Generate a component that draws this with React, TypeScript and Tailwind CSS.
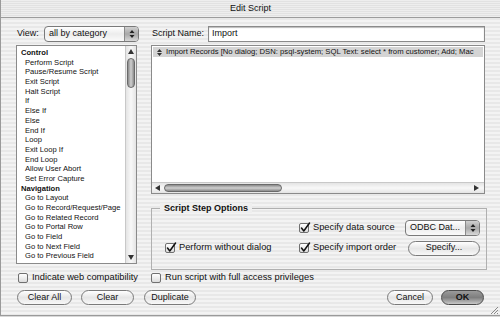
import type { ReactNode } from "react";

const listItems: { label: string; head?: boolean }[] = [
  { label: "Control", head: true },
  { label: "Perform Script" },
  { label: "Pause/Resume Script" },
  { label: "Exit Script" },
  { label: "Halt Script" },
  { label: "If" },
  { label: "Else If" },
  { label: "Else" },
  { label: "End If" },
  { label: "Loop" },
  { label: "Exit Loop If" },
  { label: "End Loop" },
  { label: "Allow User Abort" },
  { label: "Set Error Capture" },
  { label: "Navigation", head: true },
  { label: "Go to Layout" },
  { label: "Go to Record/Request/Page" },
  { label: "Go to Related Record" },
  { label: "Go to Portal Row" },
  { label: "Go to Field" },
  { label: "Go to Next Field" },
  { label: "Go to Previous Field" },
  { label: "Enter Browse Mode" },
];

function Check({ on }: { on?: boolean }) {
  return (
    <span className="relative inline-block h-[10px] w-[10px] shrink-0 rounded-[2px] border border-[#707070] bg-gradient-to-b from-white to-[#dcdcdc]">
      {on && (
        <svg className="absolute left-[0px] top-[-2px]" width="11" height="11" viewBox="0 0 11 11">
          <path d="M1.5 6 L3.8 9 L9.5 1" fill="none" stroke="#111" strokeWidth="1.5" strokeLinecap="round" strokeLinejoin="round" />
        </svg>
      )}
    </span>
  );
}

function CheckRow({ on, children, className = "" }: { on?: boolean; children: ReactNode; className?: string }) {
  return (
    <div className={`flex items-center gap-[4px] text-[9.3px] text-[#111] ${className}`}>
      <Check on={on} />
      <span>{children}</span>
    </div>
  );
}

function Btn({ children, className = "", primary }: { children: ReactNode; className?: string; primary?: boolean }) {
  return (
    <div
      className={`flex h-[15px] items-center justify-center rounded-full border text-[9px] text-[#111] ${
        primary
          ? "border-[#4a4a4a] bg-gradient-to-b from-[#9a9a9a] via-[#7e7e7e] to-[#c8c8c8] font-bold"
          : "border-[#7a7a7a] bg-gradient-to-b from-white via-[#e6e6e6] to-[#f8f8f8]"
      } ${className}`}
    >
      {children}
    </div>
  );
}

function Popup({ children, className = "" }: { children: ReactNode; className?: string }) {
  return (
    <div className={`flex h-[16px] items-stretch overflow-hidden rounded-[4px] border border-[#7a7a7a] bg-gradient-to-b from-white via-[#ececec] to-[#fafafa] ${className}`}>
      <span className="flex flex-1 items-center pl-[4px] text-[9px] text-[#111]">{children}</span>
      <span className="flex w-[14px] flex-col items-center justify-center border-l border-[#8a8a8a] bg-gradient-to-b from-[#d0d0d0] via-[#a8a8a8] to-[#d8d8d8]">
        <svg width="6" height="10" viewBox="0 0 6 10">
          <path d="M0.5 4 L3 1 L5.5 4 Z M0.5 6 L3 9 L5.5 6 Z" fill="#222" />
        </svg>
      </span>
    </div>
  );
}

export default function App() {
  return (
    <div className="h-[317px] w-[500px] overflow-hidden bg-[#d8d8d8] font-['Liberation_Sans',Arial,sans-serif]">
      <div className="flex h-[316px] flex-col border-b border-l border-[#9a9a9a] bg-[repeating-linear-gradient(180deg,#f3f3f3_0px,#f3f3f3_2px,#e8e8e8_2px,#e8e8e8_4px)]">
        {/* Title bar */}
        <div className="flex h-[18px] shrink-0 items-center justify-center border-b border-[#9c9c9c] bg-[repeating-linear-gradient(180deg,#eeeeee_0px,#eeeeee_1px,#e2e2e2_1px,#e2e2e2_2px)] text-[9px] text-[#111]">
          Edit Script
        </div>

        <div className="flex gap-[12px] pl-[15px] pt-[8px]">
          {/* Left column */}
          <div className="flex w-[123px] flex-col">
            <div className="flex h-[16px] items-center">
              <span className="w-[28px] pl-[1px] text-[9px] text-[#111]">View:</span>
              <Popup className="w-[95px]">all by category</Popup>
            </div>
            <div className="mt-[3px] flex h-[219px] w-[121px] border border-[#8a8a8a] bg-white">
              <div className="flex-1 overflow-hidden pl-[4px] pt-[2px]">
                {listItems.map((it) => (
                  <div
                    key={it.label}
                    className={`h-[9.7px] whitespace-nowrap text-[7.6px] leading-[9.7px] text-[#111] ${
                      it.head ? "font-bold" : "pl-[4px]"
                    }`}
                  >
                    {it.label}
                  </div>
                ))}
              </div>
              {/* vertical scrollbar */}
              <div className="flex w-[11px] flex-col items-center border-l border-[#c8c8c8] bg-gradient-to-r from-[#e4e4e4] via-[#f8f8f8] to-[#e4e4e4]">
                <svg className="mt-[3px]" width="6" height="5" viewBox="0 0 6 5">
                  <path d="M0 5 L3 0 L6 5 Z" fill="#333" />
                </svg>
                <div className="mt-[4px] h-[30px] w-[8px] rounded-full border border-[#6a6a6a] bg-gradient-to-r from-[#8a8a8a] via-[#d0d0d0] to-[#8a8a8a]" />
                <div className="flex-1" />
                <svg className="mb-[3px]" width="6" height="5" viewBox="0 0 6 5">
                  <path d="M0 0 L3 5 L6 0 Z" fill="#333" />
                </svg>
              </div>
            </div>
          </div>

          {/* Right column */}
          <div className="flex w-[336px] flex-col">
            <div className="flex h-[16px] items-center">
              <span className="w-[57px] pl-[1px] text-[9px] text-[#111]">Script Name:</span>
              <div className="flex h-[16px] w-[277px] items-center border border-[#8a8a8a] bg-white pl-[3px] text-[9px] text-[#111] shadow-[inset_0_1px_1px_#bbb]">
                Import
              </div>
            </div>

            <div className="mt-[3px] flex h-[149px] w-[334px] flex-col border border-[#8a8a8a] bg-white">
              <div className="mx-[1px] mt-[1px] flex h-[10px] items-center gap-[4px] bg-[#d4d4d4] pl-[4px]">
                <svg width="5" height="7" viewBox="0 0 5 7">
                  <path d="M0 3 L2.5 0 L5 3 Z M0 4 L2.5 7 L5 4 Z" fill="#333" />
                </svg>
                <span className="whitespace-nowrap text-[7.7px] leading-[10px] text-[#111]">
                  Import Records [No dialog; DSN: psql-system; SQL Text: select * from customer; Add; Mac
                </span>
              </div>
              <div className="flex-1" />
              {/* horizontal scrollbar */}
              <div className="flex h-[11px] items-center border-t border-[#c8c8c8] bg-gradient-to-b from-[#e4e4e4] via-[#f8f8f8] to-[#e4e4e4]">
                <svg className="ml-[3px]" width="5" height="6" viewBox="0 0 5 6">
                  <path d="M5 0 L0 3 L5 6 Z" fill="#333" />
                </svg>
                <div className="ml-[4px] h-[8px] w-[118px] rounded-full border border-[#6a6a6a] bg-gradient-to-b from-[#8a8a8a] via-[#d0d0d0] to-[#8a8a8a]" />
                <div className="flex-1" />
                <svg className="mr-[5px]" width="5" height="6" viewBox="0 0 5 6">
                  <path d="M0 0 L5 3 L0 6 Z" fill="#333" />
                </svg>
              </div>
            </div>

            {/* Script Step Options */}
            <div className="relative mt-[14px] h-[62px] w-[336px] border border-[#b0b0b0]">
              <span className="absolute left-[8px] top-[-6px] bg-[#efefef] px-[4px] text-[9px] font-bold leading-[10px] text-[#111]">
                Script Step Options
              </span>
              <div className="mt-[11px] flex h-[16px] items-center">
                <div className="w-[147px]" />
                <div className="w-[106px]">
                  <CheckRow on>Specify data source</CheckRow>
                </div>
                <Popup className="w-[75px]">ODBC Dat...</Popup>
              </div>
              <div className="mt-[4px] flex h-[16px] items-center">
                <div className="w-[147px] pl-[13px]">
                  <CheckRow on>Perform without dialog</CheckRow>
                </div>
                <div className="w-[109px]">
                  <CheckRow on>Specify import order</CheckRow>
                </div>
                <Btn className="w-[72px]">Specify...</Btn>
              </div>
            </div>
          </div>
        </div>

        {/* Bottom checkboxes */}
        <div className="mt-[2px] flex h-[11px] items-center pl-[17px]">
          <CheckRow className="w-[133px]">Indicate web compatibility</CheckRow>
          <CheckRow>Run script with full access privileges</CheckRow>
        </div>

        {/* Buttons */}
        <div className="mt-[7px] flex items-center pl-[16px] pr-[16px]">
          <Btn className="w-[55px]">Clear All</Btn>
          <Btn className="ml-[9px] w-[53px]">Clear</Btn>
          <Btn className="ml-[10px] w-[52px]">Duplicate</Btn>
          <div className="flex-1" />
          <Btn className="w-[46px]">Cancel</Btn>
          <Btn primary className="ml-[8px] w-[43px]">OK</Btn>
        </div>
        <div className="flex-1" />
        <div className="flex justify-end pb-[1px] pr-[1px]">
          <svg width="10" height="10" viewBox="0 0 10 10">
            <path d="M9 2 L2 9 M9 5 L5 9 M9 8 L8 9" stroke="#888" strokeWidth="1" />
          </svg>
        </div>
      </div>
    </div>
  );
}
